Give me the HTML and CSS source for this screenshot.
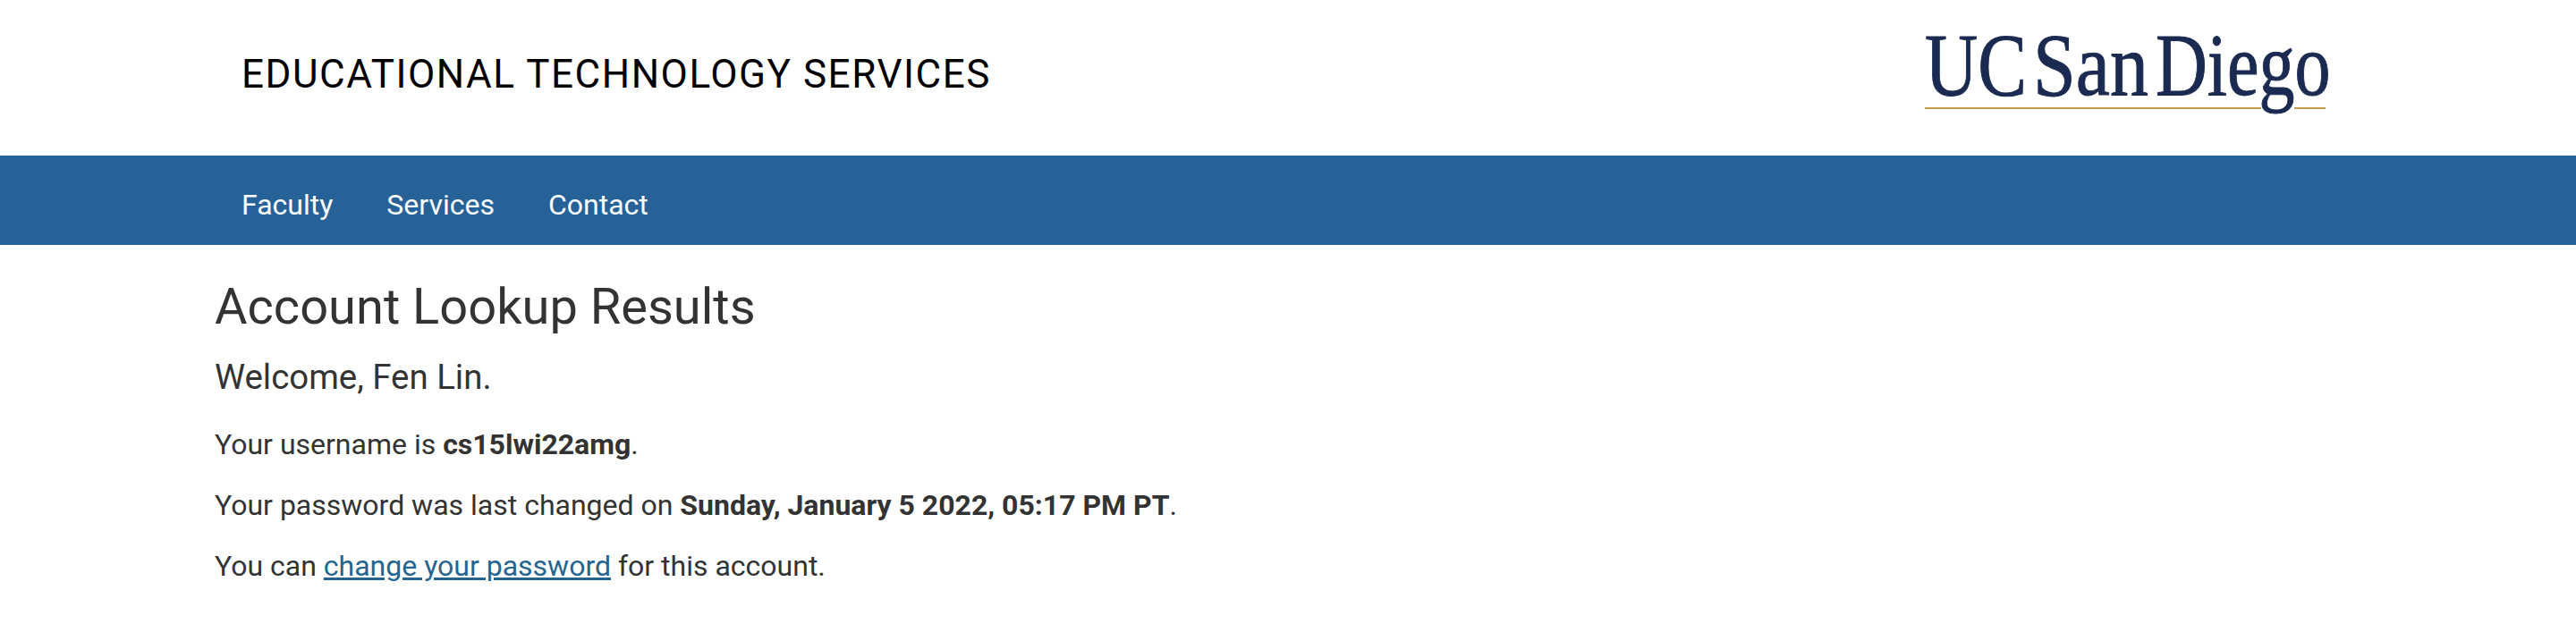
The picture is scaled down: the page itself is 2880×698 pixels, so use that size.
FILE: index.html
```html
<!DOCTYPE html>
<html lang="en">
<head>
<meta charset="utf-8">
<title>Account Lookup Results</title>
<link rel="stylesheet" href="styles.css">
</head>
<body>
<header class="masthead">
  <div class="site-title">EDUCATIONAL TECHNOLOGY SERVICES</div>
  <svg class="logo" width="456" height="130" viewBox="0 -20 456 130" role="img" aria-label="UC San Diego">
    <g class="logo-text">
      <text transform="translate(0 76) scale(.82 1)">UC</text>
      <text transform="translate(121 76) scale(.86 1)">San</text>
      <text transform="translate(258 76) scale(.8 1)">Diego</text>
    </g>
    <path class="logo-rule" d="M0 91H376M413 91H448"/>
  </svg>
</header>
<nav class="navbar">
  <a href="#">Faculty</a>
  <a href="#">Services</a>
  <a href="#">Contact</a>
</nav>
<main class="content">
  <h1>Account Lookup Results</h1>
  <h2>Welcome, Fen Lin.</h2>
  <p>Your username is <strong>cs15lwi22amg</strong>.</p>
  <p>Your password was last changed on <strong>Sunday, January 5 2022, 05:17 PM PT</strong>.</p>
  <p>You can <a href="#">change your password</a> for this account.</p>
</main>
</body>
</html>
```
FILE: styles.css
```css
html, body { margin: 0; padding: 0; background: #fff; }
body { font-family: Roboto, "Liberation Sans", sans-serif; color: #333; font-size: 32px; line-height: 46px; }
.masthead { height: 174px; padding: 10px 272px 0 270px; display: flex; justify-content: space-between; align-items: flex-start; box-sizing: border-box; }
.site-title { font-size: 44px; letter-spacing: 1.54px; color: #000; line-height: 52px; margin-top: 47px; }
.logo { display: block; }
.logo-text { font-family: "Liberation Serif", serif; font-size: 100px; fill: #1b2a50; stroke: #1b2a50; stroke-width: 1; }
.logo-rule { fill: none; stroke: #c69c4d; stroke-width: 2; }
.navbar { height: 100px; box-sizing: border-box; background: #266298; display: flex; align-items: center; gap: 60px; padding: 10px 0 0 270px; }
.navbar a { color: #fff; text-decoration: none; font-size: 32px; }
.content { padding: 0 240px; }
h1 { font-size: 56px; font-weight: 400; line-height: 62px; margin: 38px 0 0; }
h2 { font-size: 38.4px; font-weight: 400; line-height: 44px; margin: 26px 0 0; }
p { margin: 0 0 22px; }
h2 + p { margin-top: 30px; }
strong { font-weight: 700; }
.content a { color: #246590; text-decoration: underline; }
```
